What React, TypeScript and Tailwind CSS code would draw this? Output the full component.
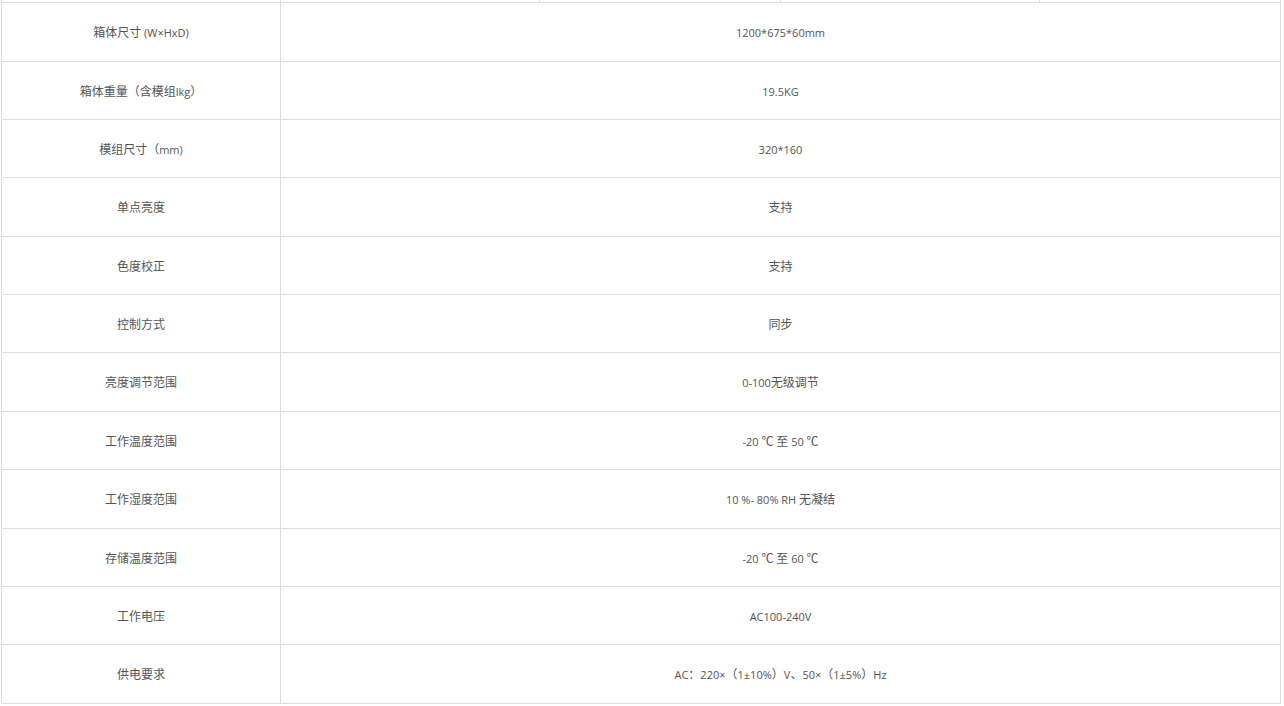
import React from "react";

const rows: { k: string; v: string; h: string }[] = [
  { k: "箱体尺寸 (W×HxD)", v: "1200*675*60mm", h: "h-[59px]" },
  { k: "箱体重量（含模组lkg）", v: "19.5KG", h: "h-[58px]" },
  { k: "模组尺寸（mm)", v: "320*160", h: "h-[58px]" },
  { k: "单点亮度", v: "支持", h: "h-[59px]" },
  { k: "色度校正", v: "支持", h: "h-[58px]" },
  { k: "控制方式", v: "同步", h: "h-[58px]" },
  { k: "亮度调节范围", v: "0-100无级调节", h: "h-[59px]" },
  { k: "工作温度范围", v: "-20 ℃ 至 50 ℃", h: "h-[58px]" },
  { k: "工作湿度范围", v: "10 %- 80% RH 无凝结", h: "h-[59px]" },
  { k: "存储温度范围", v: "-20 ℃ 至 60 ℃", h: "h-[58px]" },
  { k: "工作电压", v: "AC100-240V", h: "h-[58px]" },
  { k: "供电要求", v: "AC：220×（1±10%）V、50×（1±5%）Hz", h: "h-[59px]" },
];

function Mixed({ text }: { text: string }) {
  const parts = text.split(/([\u2100-\u214f\u3000-\u9fff\uff00-\uffef]+)/).filter(Boolean);
  return (
    <span>
      {parts.map((p, i) =>
        /[\u2100-\u214f\u3000-\u9fff\uff00-\uffef]/.test(p) ? (
          <span key={i} className="text-[12px]">{p}</span>
        ) : (
          <span key={i} className="text-[11px]">{p}</span>
        )
      )}
    </span>
  );
}

export default function App() {
  return (
    <div
      className="min-h-[706px] bg-white text-[12px] text-[#555]"
      style={{ fontFamily: '"Open Sans", "Noto Sans CJK SC", sans-serif' }}
    >
      <div className="ml-px w-[1280px] border-x border-[#ddd]">
        <div className="flex h-[2px]">
          <div className="w-[279px] border-r border-[#ddd]" />
          <div className="w-[259px] border-r border-[#ddd]" />
          <div className="w-[241px] border-r border-[#ddd]" />
          <div className="w-[259px] border-r border-[#ddd]" />
          <div className="flex-1" />
        </div>
        <div className="border-t border-[#ddd]">
          {rows.map((r, i) => (
            <div key={i} className={`flex border-b border-[#ddd] ${r.h}`}>
              <div className="flex w-[279px] items-center justify-center border-r border-[#ddd] pt-[2px] leading-none">
                <Mixed text={r.k} />
              </div>
              <div className="flex flex-1 items-center justify-center pt-[2px] leading-none">
                <Mixed text={r.v} />
              </div>
            </div>
          ))}
        </div>
      </div>
    </div>
  );
}
